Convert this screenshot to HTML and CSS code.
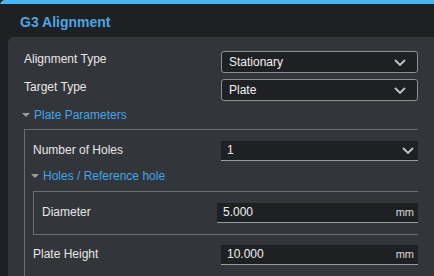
FILE: index.html
```html
<!DOCTYPE html>
<html lang="en">
<head>
    <meta charset="UTF-8">
    <meta name="viewport" content="width=device-width, initial-scale=1.0">
    <title>G3 Alignment</title>
    <link rel="stylesheet" href="styles.css">
</head>
<body>
    <div class="window">
        <div class="accent"></div>
        <h1 class="title">G3 Alignment</h1>

        <div class="panel">
            <div class="field">
                <label>Alignment Type</label>
                <div class="select">
                    <span>Stationary</span>
                    <svg class="chevron" width="12" height="7" viewBox="0 0 12 7"><polyline points="1,1 6,6 11,1"/></svg>
                </div>
            </div>
            <div class="field">
                <label>Target Type</label>
                <div class="select">
                    <span>Plate</span>
                    <svg class="chevron" width="12" height="7" viewBox="0 0 12 7"><polyline points="1,1 6,6 11,1"/></svg>
                </div>
            </div>

            <div class="group-head"><span class="caret"></span>Plate Parameters</div>
            <div class="group">
                <div class="field field-flat">
                    <label>Number of Holes</label>
                    <div class="input">
                        <span>1</span>
                        <svg class="chevron chevron-flat" width="12" height="7" viewBox="0 0 12 7"><polyline points="1,1 6,6 11,1"/></svg>
                    </div>
                </div>

                <div class="group-head group-head-sub"><span class="caret"></span>Holes / Reference hole</div>
                <div class="box">
                    <div class="field field-flat field-wide">
                        <label>Diameter</label>
                        <div class="input">
                            <span>5.000</span>
                            <span class="unit">mm</span>
                        </div>
                    </div>
                </div>

                <div class="field field-flat plate-height">
                    <label>Plate Height</label>
                    <div class="input">
                        <span>10.000</span>
                        <span class="unit">mm</span>
                    </div>
                </div>
            </div>
        </div>
    </div>
</body>
</html>
```

FILE: styles.css
```css
/* Reset */
body, h1 {
    margin: 0;
    padding: 0;
}

body {
    background-color: #1a1b1e;
    font-family: "Liberation Sans", Arial, sans-serif;
    font-size: 12px;
    color: #e6e6e6;
    overflow: hidden;
}

.window {
    background-color: #1f2024;
    border-top-left-radius: 5px;
    overflow: hidden;
    height: 276px;
}

.accent {
    height: 4px;
    background-color: #4cb2f0;
}

.title {
    box-sizing: border-box;
    height: 33px;
    padding: 8px 0 0 20px;
    font-size: 14px;
    line-height: 20px;
    font-weight: bold;
    color: #4ba6e3;
}

.panel {
    margin-left: 8px;
    padding: 14px 16px 0 16px;
    background-color: #32353a;
    border-top-left-radius: 6px;
    height: 300px;
}

/* One label + control row */
.field {
    display: grid;
    grid-template-columns: 1fr 197px;
    align-items: center;
    height: 22px;
}

.field + .field {
    margin-top: 6px;
}

.field label {
    line-height: 14px;
    padding-bottom: 6px;
    color: #e8e8e8;
}

.field-flat {
    height: 20px;
}

.field-flat label {
    padding-bottom: 2px;
}

.field-wide {
    grid-template-columns: 1fr 201px;
}

/* Bordered dropdown */
.select {
    box-sizing: border-box;
    height: 22px;
    display: flex;
    align-items: center;
    justify-content: space-between;
    padding-left: 7px;
    background-color: #1f2023;
    border: 1px solid #8e8f91;
    border-radius: 3px;
    line-height: 20px;
    color: #f2f2f2;
}

/* Underlined input / dropdown */
.input {
    box-sizing: border-box;
    height: 20px;
    display: flex;
    align-items: center;
    justify-content: space-between;
    padding-left: 6px;
    background-color: #1f2023;
    border-bottom: 1px solid #9c9c9c;
    line-height: 19px;
    color: #f2f2f2;
}

.chevron {
    margin-right: 11px;
}

.chevron polyline {
    fill: none;
    stroke: #c4c4c4;
    stroke-width: 1.8;
}

.chevron-flat {
    margin-right: 4px;
}

.unit {
    font-size: 11px;
    padding-right: 4px;
    color: #dcdcdc;
}

/* Collapsible section headers */
.group-head {
    display: flex;
    align-items: center;
    gap: 4px;
    height: 28px;
    margin-left: -2px;
    color: #42a5e8;
}

.group-head-sub {
    height: 30px;
}

.caret {
    width: 0;
    height: 0;
    border-left: 4px solid transparent;
    border-right: 4px solid transparent;
    border-top: 4px solid #9a9b9d;
}

.group {
    border-top: 1px solid #6b6e72;
    border-left: 1px solid #6b6e72;
    padding: 11px 0 40px 8px;
}

.box {
    border-top: 1px solid #6b6e72;
    border-left: 1px solid #6b6e72;
    border-bottom: 1px solid #6b6e72;
    padding: 11px 0 11px 8px;
}

.plate-height {
    margin-top: 10px;
}
```
